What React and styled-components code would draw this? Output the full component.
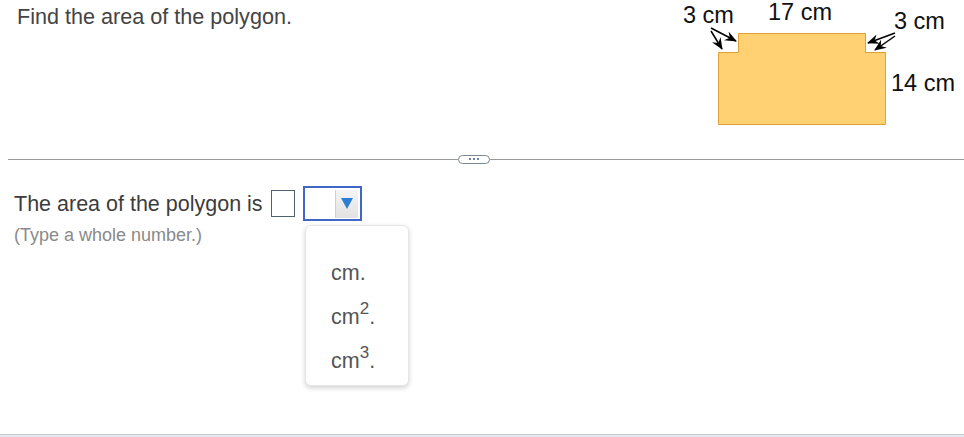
import React from "react";
import styled, { createGlobalStyle } from "styled-components";

const Global = createGlobalStyle`
  html, body { margin: 0; padding: 0; background: #fff; }
  body { font-family: "Liberation Sans", Arial, sans-serif; }
`;

const Page = styled.div`
  position: relative;
  width: 964px;
  height: 437px;
  box-sizing: border-box;
  border-bottom: 2px solid #e3e8ed;
  overflow: hidden;
  &::after {
    content: "";
    position: absolute;
    left: 0;
    right: 0;
    bottom: 0;
    height: 1px;
    background: #c3ccd5;
  }
`;

const Top = styled.div`
  display: flex;
  justify-content: space-between;
  height: 154px;
`;

const Question = styled.div`
  padding: 4px 0 0 17px;
  font-size: 21.6px;
  color: #444;
`;

const Figure = styled.svg`
  display: block;
  overflow: visible;
`;

const DividerRow = styled.div`
  display: flex;
  align-items: center;
  height: 10px;
`;

const Line = styled.div`
  height: 1px;
  background: #9a9a9a;
  margin-left: ${(p) => p.$ml || 0}px;
  width: ${(p) => (p.$w ? `${p.$w}px` : "auto")};
  flex: ${(p) => (p.$w ? "none" : 1)};
`;

const Pill = styled.div`
  width: 30px;
  height: 7px;
  border: 1px solid #7a8896;
  border-radius: 5px;
  display: flex;
  align-items: center;
  justify-content: center;
  gap: 2px;
  background: #fff;
`;

const Dot = styled.span`
  width: 2px;
  height: 2px;
  background: #3a5a8a;
  border-radius: 1px;
`;

const Answer = styled.div`
  position: relative;
  padding: 22px 0 0 14px;
`;

const AnswerLine = styled.div`
  display: flex;
  align-items: center;
  gap: 8px;
  font-size: 21.5px;
  color: #3c3c3c;
  height: 35px;
  span {
    position: relative;
    top: 1px;
  }
`;

const NumBox = styled.div`
  width: 22px;
  height: 25px;
  border: 1px solid #4f6070;
`;

const Select = styled.div`
  width: 53px;
  height: 31px;
  border: 2px solid #3f68c6;
  display: flex;
  justify-content: flex-end;
  align-items: center;
  padding-right: 2px;
`;

const SelectButton = styled.div`
  width: 22px;
  height: 28px;
  background: linear-gradient(#f4f4f4, #e2e2e2);
  border-left: 1px solid #d0d0d0;
  display: flex;
  align-items: center;
  justify-content: center;
`;

const Hint = styled.div`
  font-size: 18px;
  color: #8a8a8a;
  margin-top: 4px;
`;

const Menu = styled.div`
  position: absolute;
  left: 305px;
  top: 61px;
  width: 104px;
  height: 161px;
  box-sizing: border-box;
  background: #fff;
  border: 1px solid #e6e6e6;
  border-radius: 6px;
  box-shadow: 0 2px 5px rgba(0, 0, 0, 0.18);
  padding: 34px 0 0 25px;
  display: flex;
  flex-direction: column;
  gap: 18px;
`;

const MenuItem = styled.div`
  font-size: 21.5px;
  color: #555;
  height: 26px;
  line-height: 26px;
  sup {
    font-size: 17px;
    line-height: 0;
    vertical-align: 10px;
  }
`;

function PolygonFigure() {
  return (
    <Figure width="294" height="135" viewBox="0 0 294 135">
      <defs>
        <marker id="ah" markerWidth="12" markerHeight="10" refX="11" refY="5" orient="auto" markerUnits="userSpaceOnUse">
          <path d="M0,0 L12,5 L0,10 L4,5 Z" fill="#000" />
        </marker>
      </defs>
      <path
        d="M48.5,52.5 H68.5 V33.5 H195.5 V52.5 H215.5 V124.5 H48.5 Z"
        fill="#ffd173"
        stroke="#e0a134"
        strokeWidth="1"
      />
      <g stroke="#000" strokeWidth="1.5" fill="none">
        <line x1="41" y1="28" x2="66" y2="41" markerEnd="url(#ah)" />
        <line x1="41" y1="31" x2="52" y2="49" markerEnd="url(#ah)" />
        <line x1="225" y1="33" x2="198" y2="43" markerEnd="url(#ah)" />
        <line x1="225" y1="36" x2="205" y2="50" markerEnd="url(#ah)" />
      </g>
      <g fontFamily="Liberation Sans, Arial, sans-serif" fontSize="23.5" fill="#111">
        <text x="13" y="23">3 cm</text>
        <text x="98" y="20">17 cm</text>
        <text x="224" y="29">3 cm</text>
        <text x="221" y="91">14 cm</text>
      </g>
    </Figure>
  );
}

export default function App() {
  return (
    <>
      <Global />
      <Page>
        <Top>
          <Question>Find the area of the polygon.</Question>
          <PolygonFigure />
        </Top>
        <DividerRow>
          <Line $ml={8} $w={450} />
          <Pill>
            <Dot />
            <Dot />
            <Dot />
          </Pill>
          <Line />
        </DividerRow>
        <Answer>
          <AnswerLine>
            <span>The area of the polygon is</span>
            <NumBox />
            <Select>
              <SelectButton>
                <svg width="12" height="11" viewBox="0 0 12 11">
                  <path d="M0,0 H12 L6,11 Z" fill="#2a7fd4" />
                </svg>
              </SelectButton>
            </Select>
          </AnswerLine>
          <Hint>(Type a whole number.)</Hint>
          <Menu>
            <MenuItem>cm.</MenuItem>
            <MenuItem>
              cm<sup>2</sup>.
            </MenuItem>
            <MenuItem>
              cm<sup>3</sup>.
            </MenuItem>
          </Menu>
        </Answer>
      </Page>
    </>
  );
}
